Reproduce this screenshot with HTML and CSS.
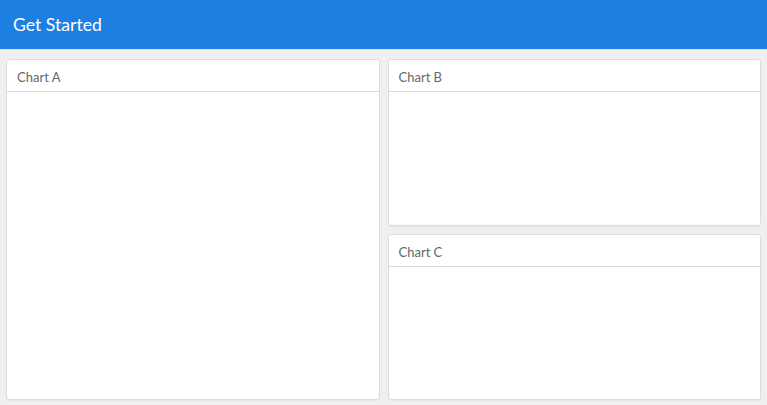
FILE: index.html
```html
<!DOCTYPE html>
<html>
<head>
<meta charset="utf-8">
<link rel="stylesheet" href="styles.css">
</head>
<body>
<header class="navbar">
  <span class="brand">Get Started</span>
</header>
<main class="dashboard">
  <section class="col">
    <div class="card tall">
      <div class="card-title">Chart A</div>
      <div class="card-body"></div>
    </div>
  </section>
  <section class="col">
    <div class="card">
      <div class="card-title">Chart B</div>
      <div class="card-body"></div>
    </div>
    <div class="card">
      <div class="card-title">Chart C</div>
      <div class="card-body"></div>
    </div>
  </section>
</main>
</body>
</html>
```
FILE: styles.css
```css
html, body {
  margin: 0;
  padding: 0;
  height: 100%;
}
body {
  background: #efefef;
  font-family: Lato, "Liberation Sans", sans-serif;
  display: flex;
  flex-direction: column;
}
.navbar {
  height: 50px;
  background: #1e7fe2;
  border-bottom: 1px solid #e4e4e4;
  display: flex;
  align-items: center;
  padding-left: 13px;
  box-sizing: border-box;
  flex-shrink: 0;
}
.brand {
  color: #ffffff;
  font-size: 17.6px;
  line-height: 1;
}
.dashboard {
  flex: 1;
  display: grid;
  grid-template-columns: 1fr 1fr;
  gap: 8px;
  padding: 9px 6px 5px 6px;
  min-height: 0;
}
.col {
  display: flex;
  flex-direction: column;
  gap: 8px;
  min-height: 0;
}
.card {
  flex: 1;
  background: #fff;
  border: 1px solid #dcdcdc;
  border-radius: 3px;
  display: flex;
  flex-direction: column;
  box-shadow: 0 1px 1px rgba(0,0,0,0.04);
}
.card-title {
  height: 32px;
  border-bottom: 1px solid #d9d9d9;
  padding-left: 10px;
  font-size: 13px;
  color: #666;
  display: flex;
  align-items: center;
  padding-top: 3px;
  box-sizing: border-box;
}
.card-body {
  flex: 1;
}
```
